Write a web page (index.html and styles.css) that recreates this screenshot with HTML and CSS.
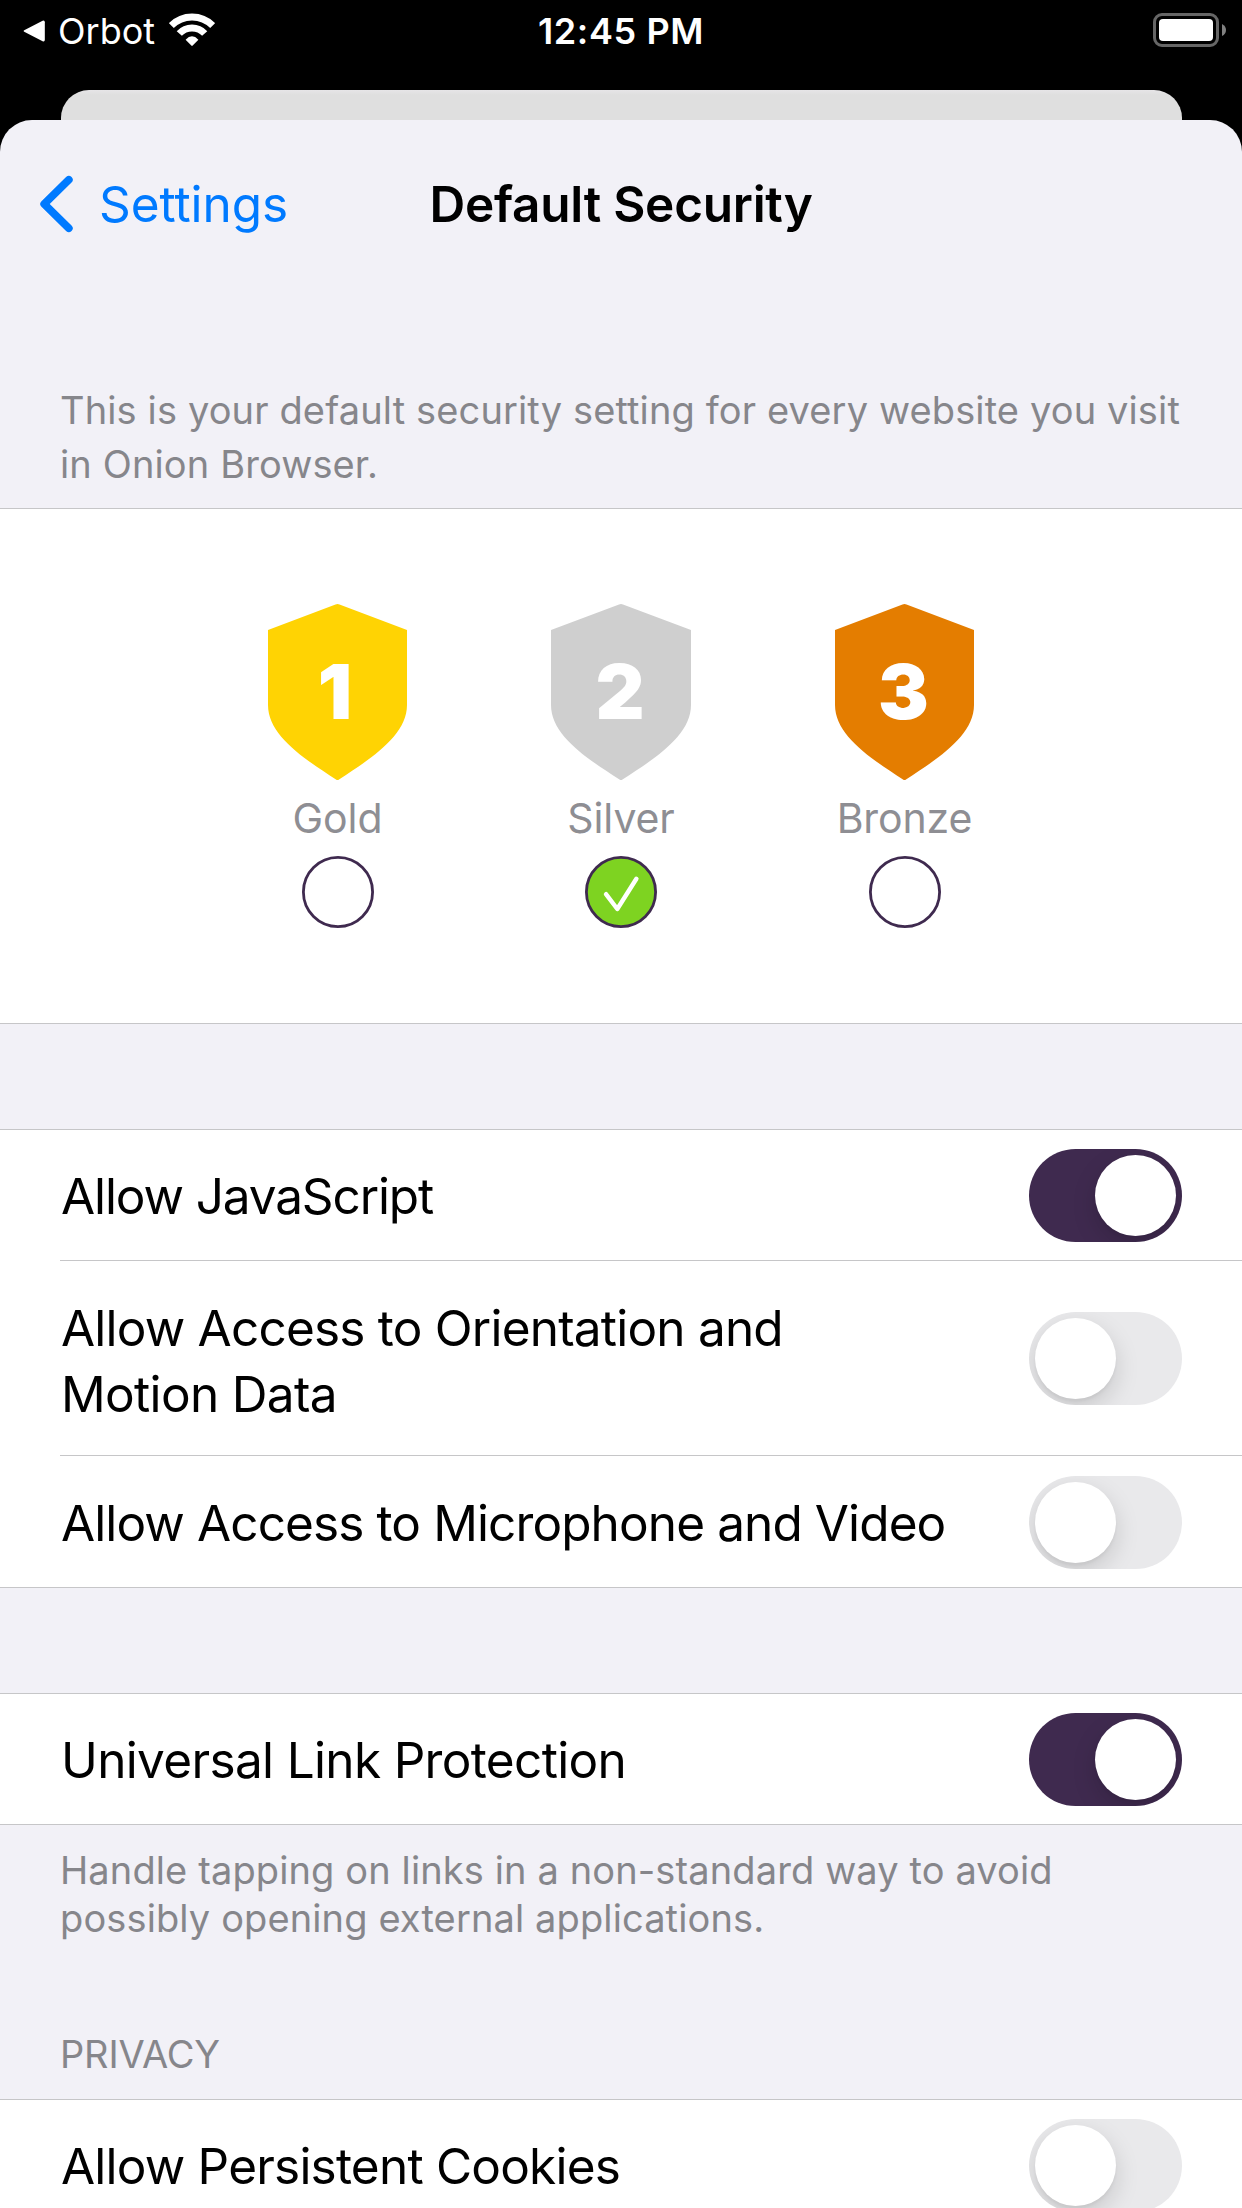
FILE: index.html
```html
<!DOCTYPE html>
<html lang="en">
<head>
<meta charset="utf-8">
<title>Default Security</title>
<link rel="stylesheet" href="styles.css">
</head>
<body>
<div class="screen">
  <header class="status">
    <div class="status-left">
      <svg class="back-app" width="24" height="24" viewBox="0 0 24 24"><path d="M2.2 11.2 L20.6 1.7 Q22.8 1 22.8 3.2 V20.8 Q22.8 23 20.6 22.3 L2.2 12.8 Q.8 12 2.2 11.2Z" fill="#fff"/></svg>
      <span class="app">Orbot</span>
      <svg class="wifi" width="46" height="34" viewBox="0 0 46 34"><g fill="none" stroke="#fff" stroke-width="7"><path d="M2.3 12.6A29 29 0 0 1 43.7 12.6"/><path d="M10.3 20.5A17.2 17.2 0 0 1 35.7 20.5"/></g><path d="M16.6 26.7Q23 20 29.4 26.7L23.7 32.6Q23 33.2 22.3 32.6Z" fill="#fff"/></svg>
    </div>
    <div class="time">12:45 PM</div>
    <div class="status-right">
      <svg width="74" height="34" viewBox="0 0 74 34"><rect x="1.5" y="1.5" width="63" height="31" rx="7.5" fill="none" stroke="#666" stroke-width="3"/><rect x="6" y="6" width="54" height="22" rx="4" fill="#fff"/><path d="M69 11Q73 13 73 17T69 23Z" fill="#808080"/></svg>
    </div>
  </header>
  <div class="sheet-behind"></div>
  <main class="sheet">
    <nav class="nav">
      <a class="back">
        <svg width="34" height="58" viewBox="0 0 34 58"><path d="M29.8 4.8L5.2 29L29.8 53.2" fill="none" stroke="#007aff" stroke-width="7.8" stroke-linecap="round" stroke-linejoin="round"/></svg>
        <span>Settings</span>
      </a>
      <h1 class="title">Default Security</h1>
    </nav>
    <p class="intro">This is your default security setting for every website you visit<br>in Onion Browser.</p>
    <section class="group levels">
      <div class="level">
        <svg class="shield" viewBox="0 0 139 176"><path d="M0 26L67.5 .5Q69.5 -.3 71.5 .5L139 26V101C139 131 104 154 71 175.5Q69.5 176.5 68 175.5C35 154 0 131 0 101Z" fill="#ffd303"/><text x="67" y="115">1</text></svg>
        <div class="name">Gold</div>
        <svg class="radio" viewBox="0 0 72 72"><circle cx="36" cy="36" r="34.6" fill="#fff"/></svg>
      </div>
      <div class="level">
        <svg class="shield wide" viewBox="0 0 140 176"><path d="M0 26L68 .5Q70 -.3 72 .5L140 26V101C140 131 105 154 71.5 175.5Q70 176.5 68.5 175.5C35 154 0 131 0 101Z" fill="#cfcfcf"/><text x="69" y="115">2</text></svg>
        <div class="name">Silver</div>
        <svg class="radio" viewBox="0 0 72 72"><circle cx="36" cy="36" r="34.6" fill="#7ed321"/><path d="M21 38.2L32.3 53L51.4 22.8" fill="none" stroke="#fff" stroke-width="4.4" stroke-linecap="round" stroke-linejoin="round"/></svg>
      </div>
      <div class="level">
        <svg class="shield" viewBox="0 0 139 176"><path d="M0 26L67.5 .5Q69.5 -.3 71.5 .5L139 26V101C139 131 104 154 71 175.5Q69.5 176.5 68 175.5C35 154 0 131 0 101Z" fill="#e47d00"/><text x="68.5" y="115">3</text></svg>
        <div class="name">Bronze</div>
        <svg class="radio" viewBox="0 0 72 72"><circle cx="36" cy="36" r="34.6" fill="#fff"/></svg>
      </div>
    </section>
    <section class="group spaced">
      <div class="row"><span class="label track-4">Allow JavaScript</span><span class="toggle on"></span></div>
      <div class="row tall"><span class="label track-2">Allow Access to Orientation and<br><span class="track-1">Motion Data</span></span><span class="toggle"></span></div>
      <div class="row last"><span class="label track-3">Allow Access to Microphone and Video</span><span class="toggle"></span></div>
    </section>
    <section class="group spaced">
      <div class="row"><span class="label track-1">Universal Link Protection</span><span class="toggle on"></span></div>
    </section>
    <p class="footnote">Handle tapping on links in a non-standard way to avoid<br>possibly opening external applications.</p>
    <h2 class="heading">PRIVACY</h2>
    <section class="group">
      <div class="row"><span class="label track-2">Allow Persistent Cookies</span><span class="toggle"></span></div>
    </section>
  </main>
</div>
</body>
</html>
```
FILE: styles.css
```css
* { box-sizing: border-box; margin: 0; padding: 0; }
body { background: #000; font-family: Inter, "Liberation Sans", sans-serif; }
svg { display: block; flex: none; }
.screen { width: 1242px; height: 2208px; overflow: hidden; display: flex; flex-direction: column; background: #000; }

.status { height: 90px; flex: none; display: grid; grid-template-columns: 1fr auto 1fr; color: #fff; font-size: 36px; line-height: 62px; }
.status-left { display: flex; align-items: center; height: 62px; padding-left: 22px; }
.app { margin-left: 12px; }
.wifi { margin: -3px 0 0 14px; }
.time { font-weight: 560; letter-spacing: .6px; }
.status-right { display: flex; justify-content: flex-end; padding: 13px 15px 0 0; }

.sheet-behind { flex: none; height: 30px; margin: 0 60px 0 61px; border-radius: 28px 28px 0 0; background: linear-gradient(#e6e5e7, #dfdfdf 5px); }
.sheet { flex: none; height: 2088px; overflow: hidden; background: #f2f1f7; border-radius: 32px 32px 0 0; }

.nav { height: 168px; display: grid; grid-template-columns: 1fr auto 1fr; align-items: center; font-size: 49.5px; line-height: 60px; }
.back { display: flex; align-items: center; gap: 26px; padding-left: 39px; color: #007aff; letter-spacing: -.05px; }
.title { font-size: inherit; font-weight: 590; letter-spacing: -.25px; }

.intro, .footnote, .heading { padding-left: 60px; font-size: 38px; font-weight: 400; color: #86868b; white-space: nowrap; }
.intro { height: 220px; padding-top: 95px; line-height: 54px; letter-spacing: .13px; }
.footnote { padding-top: 21px; line-height: 48px; letter-spacing: .12px; }
.heading { padding: 88px 0 21px 60px; line-height: 48px; letter-spacing: -.15px; }

.group { background: #fff; border-top: 1px solid #c6c6c8; border-bottom: 1px solid #c6c6c8; }
.spaced { margin-top: 105px; }

.levels { height: 516px; padding-top: 95px; display: flex; justify-content: center; }
.level { width: 283.5px; display: flex; flex-direction: column; align-items: center; }
.shield { width: 139px; height: 176px; }
.shield.wide { width: 140px; }
.shield text { fill: #fff; font-size: 76px; font-weight: 900; text-anchor: middle; }
.name { font-size: 41px; line-height: 76px; color: #8e8e93; letter-spacing: -.1px; }
.radio { width: 72px; height: 72px; }
.radio circle { stroke: #3f2a4f; stroke-width: 2.8px; }

.row { display: flex; justify-content: space-between; align-items: center; height: 130px; margin-left: 60px; padding-right: 60px; }
.row.tall { height: 195px; }
.row.last { height: 132px; }
.row + .row { border-top: 1px solid #c6c6c8; }
.label { padding: 2px 0 0 1px; font-size: 49.5px; line-height: 66px; color: #000; white-space: nowrap; }
.tall .label { padding-top: 6px; }
.track-1 { letter-spacing: -.66px; }
.track-2 { letter-spacing: -.79px; }
.track-3 { letter-spacing: -.89px; }
.track-4 { letter-spacing: -1.12px; }

.toggle { flex: none; width: 153px; height: 93px; margin-top: 1px; padding: 6px; border-radius: 47px; overflow: hidden; background: #e9e9eb; display: flex; }
.toggle::after { content: ""; width: 81px; height: 81px; border-radius: 50%; background: #fff; box-shadow: 0 9px 24px rgba(0, 0, 0, .15), 0 3px 3px rgba(0, 0, 0, .04); }
.toggle.on { background: #3f2a4f; justify-content: flex-end; }
```
